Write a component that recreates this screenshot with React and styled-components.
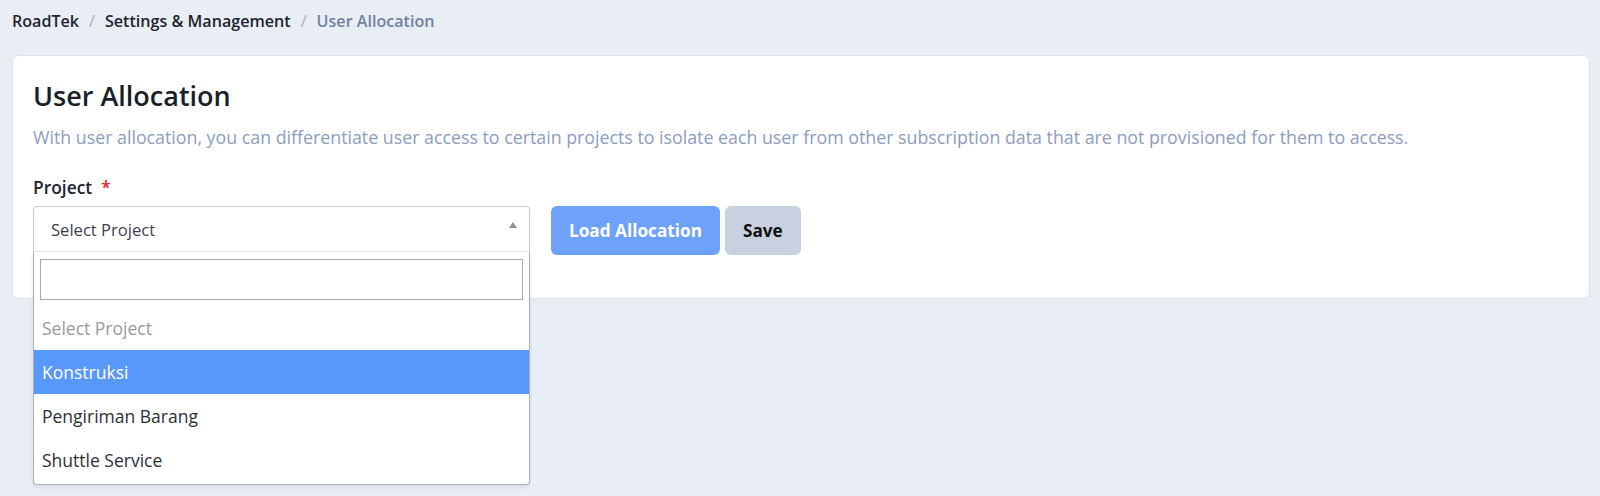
import React from 'react'
import styled, { createGlobalStyle } from 'styled-components'

const GlobalStyle = createGlobalStyle`
  body {
    margin: 0;
    background: #e9edf4;
    font-family: "Open Sans", "Noto Sans", sans-serif;
    color: #1f2430;
  }
`

const Page = styled.div`
  padding: 0 10px 0 12px;
  height: 496px;
  box-sizing: border-box;
`

const Breadcrumb = styled.nav`
  display: flex;
  align-items: center;
  height: 41px;
  font-size: 16.1px;
  font-weight: 600;
`

const Crumb = styled.span`
  color: ${p => (p.$active ? '#6f82a3' : '#1f2430')};
`

const Sep = styled.span`
  color: #a3acbb;
  font-weight: 400;
  margin: 0 10px;
`

const Card = styled.section`
  background: #fff;
  border: 1px solid #dde2ea;
  border-radius: 7px;
  margin-top: 14px;
  padding: 22px 20px 43px;
`

const Title = styled.h1`
  margin: 0;
  font-size: 27px;
  font-weight: 600;
  color: #1a1f29;
  line-height: 36px;
`

const Description = styled.p`
  margin: 11px 0 0;
  font-size: 17.8px;
  color: #8c9dbe;
  line-height: 24px;
`

const Label = styled.div`
  margin-top: 27px;
  font-size: 17.4px;
  font-weight: 600;
  color: #1f2430;
  line-height: 22px;
`

const Required = styled.span`
  color: #e0242b;
  margin-left: 9px;
`

const Row = styled.div`
  display: flex;
  align-items: flex-start;
  margin-top: 8px;
`

const SelectWrap = styled.div`
  position: relative;
  width: 497px;
  margin-right: 21px;
`

const SelectBox = styled.div`
  display: flex;
  align-items: center;
  justify-content: space-between;
  height: 46px;
  box-sizing: border-box;
  border: 1px solid #c9ced6;
  border-bottom-color: #e4e7ec;
  border-radius: 4px 4px 0 0;
  padding: 0 12px 0 17px;
  font-size: 16.6px;
  color: #3c4250;
`

const Arrow = styled.span`
  width: 0;
  height: 0;
  border-left: 4px solid transparent;
  border-right: 4px solid transparent;
  border-bottom: 6px solid #8a8f98;
  margin-top: -8px;
`

const Dropdown = styled.div`
  position: absolute;
  top: 46px;
  left: 0;
  right: 0;
  padding-bottom: 2px;
  background: #fff;
  border: 1px solid #aab0b9;
  border-top: none;
  border-radius: 0 0 4px 4px;
  box-shadow: 0 2px 4px rgba(0, 0, 0, 0.08);
  z-index: 5;
`

const Search = styled.div`
  margin: 7px 6px 6px;
  height: 41px;
  box-sizing: border-box;
  border: 1px solid #aaaaaa;
`

const Option = styled.div`
  height: 44px;
  display: flex;
  align-items: center;
  padding: 0 8px;
  font-size: 17.5px;
  color: ${p => (p.$muted ? '#9a9a9a' : p.$active ? '#fff' : '#2b2f38')};
  background: ${p => (p.$active ? '#5897fb' : 'transparent')};
`

const Button = styled.button`
  height: 49px;
  border: none;
  border-radius: 6px;
  padding: 0 18px;
  font-family: inherit;
  font-size: 17.2px;
  font-weight: 700;
  color: ${p => (p.$primary ? '#fff' : '#111')};
  background: ${p => (p.$primary ? '#6ea2fa' : '#c8d1e0')};
  margin-right: 5px;
  cursor: pointer;
`

const options = ['Konstruksi', 'Pengiriman Barang', 'Shuttle Service']

export default function App() {
  return (
    <Page>
      <GlobalStyle />
      <Breadcrumb>
        <Crumb>RoadTek</Crumb>
        <Sep>/</Sep>
        <Crumb>Settings &amp; Management</Crumb>
        <Sep>/</Sep>
        <Crumb $active>User Allocation</Crumb>
      </Breadcrumb>
      <Card>
        <Title>User Allocation</Title>
        <Description>
          With user allocation, you can differentiate user access to certain projects to isolate each user from other subscription data that are not provisioned for them to access.
        </Description>
        <Label>
          Project<Required>*</Required>
        </Label>
        <Row>
          <SelectWrap>
            <SelectBox>
              <span>Select Project</span>
              <Arrow />
            </SelectBox>
            <Dropdown>
              <Search />
              <Option $muted>Select Project</Option>
              {options.map((o, i) => (
                <Option key={o} $active={i === 0}>{o}</Option>
              ))}
            </Dropdown>
          </SelectWrap>
          <Button $primary>Load Allocation</Button>
          <Button>Save</Button>
        </Row>
      </Card>
    </Page>
  )
}
